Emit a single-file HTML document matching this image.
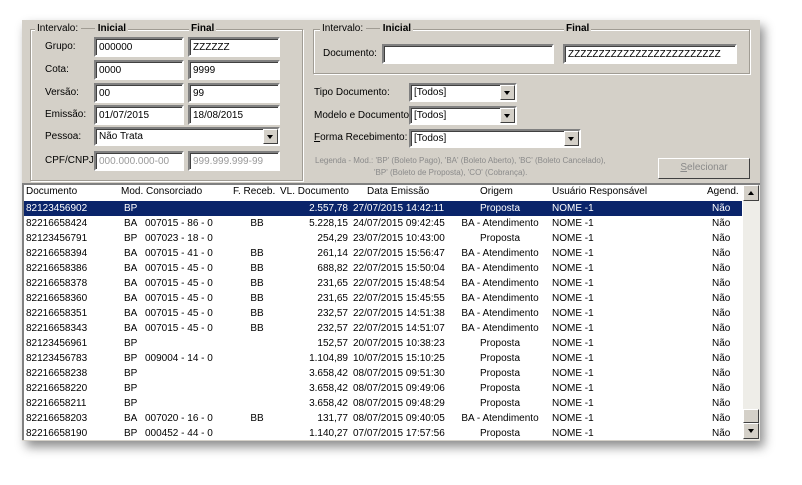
<!DOCTYPE html>
<html><head><meta charset="utf-8"><style>
*{margin:0;padding:0;box-sizing:border-box}
body{width:802px;height:485px;background:#fff;position:relative;overflow:hidden;font-family:"Liberation Sans",Arial,sans-serif;font-size:10px;color:#000}
.a{position:absolute;white-space:nowrap}
.win{position:absolute;left:22px;top:20px;width:738px;height:421px;background:#d4d0c8;box-shadow:4px 6px 10px rgba(0,0,0,.45)}
.gb{position:absolute;border:1px solid #a09c94;box-shadow:1px 1px 0 #fff inset,1px 1px 0 #fff}
.lg{position:absolute;top:-7px;background:#d4d0c8;padding:0 2px;font-size:10px}
.in{position:absolute;background:#fff;border:2px solid;border-color:#808080 #fff #fff #808080;box-shadow:inset 1px 1px 0 #404040;height:20px;padding:2px 3px;font-size:10px;line-height:14px;overflow:hidden;white-space:nowrap}
.dis2{background:#fff;color:#9a9a9a}
.cb{position:absolute;background:#fff;border:2px solid;border-color:#808080 #fff #fff #808080;box-shadow:inset 1px 1px 0 #404040;height:19px;padding:1px 3px;line-height:14px}
.cb .btn{position:absolute;right:0;top:0;width:15px;height:15px;background:#d4d0c8;border:1px solid;border-color:#fff #404040 #404040 #fff}
.tri{position:absolute;left:3px;top:5px;width:0;height:0;border-left:3.5px solid transparent;border-right:3.5px solid transparent;border-top:4px solid #000}
.list{position:absolute;left:22px;top:183px;width:738px;height:257px;background:#fff;border-top:2px solid #808080;border-left:2px solid #808080}
.row{position:absolute;left:0;width:718px;height:15px;line-height:15px}
.row span{position:absolute;white-space:nowrap}
.sel{background:#0a246a;color:#fff}
</style></head><body>
<div class="win"></div>
<div class="gb" style="left:30px;top:29px;width:273px;height:152px">
<div class="lg" style="left:4px">Intervalo: <span style="display:inline-block;width:14px;border-top:1px solid #a09c94;vertical-align:middle"></span> <b>Inicial</b></div>
<div class="lg" style="left:158px"><b>Final</b></div>
</div>
<div class="a" style="left:45px;top:41px">Grupo:</div>
<div class="a" style="left:45px;top:64px">Cota:</div>
<div class="a" style="left:45px;top:87px">Versão:</div>
<div class="a" style="left:45px;top:109px">Emissão:</div>
<div class="a" style="left:45px;top:131px">Pessoa:</div>
<div class="a" style="left:45px;top:155px">CPF/CNPJ:</div>
<div class="in" style="left:94px;top:37px;width:90px">000000</div>
<div class="in" style="left:188px;top:37px;width:92px">ZZZZZZ</div>
<div class="in" style="left:94px;top:60px;width:90px">0000</div>
<div class="in" style="left:188px;top:60px;width:92px">9999</div>
<div class="in" style="left:94px;top:83px;width:90px">00</div>
<div class="in" style="left:188px;top:83px;width:92px">99</div>
<div class="in" style="left:94px;top:105px;width:90px">01/07/2015</div>
<div class="in" style="left:188px;top:105px;width:92px">18/08/2015</div>
<div class="cb" style="left:94px;top:127px;width:186px">Não Trata<div class="btn"><div class="tri"></div></div></div>
<div class="in dis2" style="left:94px;top:151px;width:90px">000.000.000-00</div>
<div class="in dis2" style="left:188px;top:151px;width:92px">999.999.999-99</div>
<div class="gb" style="left:313px;top:29px;width:437px;height:45px">
<div class="lg" style="left:6px">Intervalo: <span style="display:inline-block;width:14px;border-top:1px solid #a09c94;vertical-align:middle"></span> <b>Inicial</b></div>
<div class="lg" style="left:250px"><b>Final</b></div>
</div>
<div class="a" style="left:323px;top:48px">Documento:</div>
<div class="in" style="left:382px;top:44px;width:172px"></div>
<div class="in" style="left:563px;top:44px;width:174px">ZZZZZZZZZZZZZZZZZZZZZZZZZ</div>
<div class="a" style="left:314px;top:87px">Tipo Documento:</div>
<div class="a" style="left:314px;top:110px">Modelo e Documento:</div>
<div class="a" style="left:314px;top:132px"><u>F</u>orma Recebimento:</div>
<div class="cb" style="left:409px;top:83px;width:108px">[Todos]<div class="btn"><div class="tri"></div></div></div>
<div class="cb" style="left:409px;top:106px;width:108px">[Todos]<div class="btn"><div class="tri"></div></div></div>
<div class="cb" style="left:409px;top:129px;width:172px">[Todos]<div class="btn"><div class="tri"></div></div></div>
<div class="a" style="left:315px;top:155px;font-size:8px;color:#8a8a8a;line-height:12px">Legenda - Mod.: 'BP' (Boleto Pago), 'BA' (Boleto Aberto), 'BC' (Boleto Cancelado),<br><span style="padding-left:59px">'BP' (Boleto de Proposta), 'CO' (Cobrança).</span></div>
<div class="a" style="left:658px;top:158px;width:92px;height:21px;border:1px solid;border-color:#fff #404040 #404040 #fff;text-align:center;line-height:18px;color:#8a8a8a;font-size:10px"><u>S</u>elecionar</div>
<div class="list">
<div class="row" style="top:0;height:16px;line-height:14px">
<span style="left:2px">Documento</span><span style="left:97px">Mod. Consorciado</span><span style="left:209px">F. Receb.</span><span style="left:256px">VL. Documento</span><span style="left:343px">Data Emissão</span><span style="left:456px">Origem</span><span style="left:528px">Usuário Responsável</span><span style="left:683px">Agend.</span>
</div>
<div id="rows"></div>
<div style="position:absolute;left:719px;top:0;width:17px;height:255px;background:#eeede8"></div>
<div style="position:absolute;left:719px;top:0;width:16px;height:16px;background:#d4d0c8;border:1px solid;border-color:#fff #404040 #404040 #fff"><div style="position:absolute;left:4px;top:5px;border-left:3.5px solid transparent;border-right:3.5px solid transparent;border-bottom:4px solid #000"></div></div>
<div style="position:absolute;left:719px;top:224px;width:16px;height:14px;background:#d4d0c8;border:1px solid;border-color:#fff #404040 #404040 #fff"></div>
<div style="position:absolute;left:719px;top:238px;width:16px;height:16px;background:#d4d0c8;border:1px solid;border-color:#fff #404040 #404040 #fff"><div style="position:absolute;left:4px;top:5px;border-left:3.5px solid transparent;border-right:3.5px solid transparent;border-top:4px solid #000"></div></div>
</div>
<script>
var d=[
["82123456902","BP","","","2.557,78","27/07/2015 14:42:11","Proposta"],
["82216658424","BA","007015 - 86 - 0","BB","5.228,15","24/07/2015 09:42:45","BA - Atendimento"],
["82123456791","BP","007023 - 18 - 0","","254,29","23/07/2015 10:43:00","Proposta"],
["82216658394","BA","007015 - 41 - 0","BB","261,14","22/07/2015 15:56:47","BA - Atendimento"],
["82216658386","BA","007015 - 45 - 0","BB","688,82","22/07/2015 15:50:04","BA - Atendimento"],
["82216658378","BA","007015 - 45 - 0","BB","231,65","22/07/2015 15:48:54","BA - Atendimento"],
["82216658360","BA","007015 - 45 - 0","BB","231,65","22/07/2015 15:45:55","BA - Atendimento"],
["82216658351","BA","007015 - 45 - 0","BB","232,57","22/07/2015 14:51:38","BA - Atendimento"],
["82216658343","BA","007015 - 45 - 0","BB","232,57","22/07/2015 14:51:07","BA - Atendimento"],
["82123456961","BP","","","152,57","20/07/2015 10:38:23","Proposta"],
["82123456783","BP","009004 - 14 - 0","","1.104,89","10/07/2015 15:10:25","Proposta"],
["82216658238","BP","","","3.658,42","08/07/2015 09:51:30","Proposta"],
["82216658220","BP","","","3.658,42","08/07/2015 09:49:06","Proposta"],
["82216658211","BP","","","3.658,42","08/07/2015 09:48:29","Proposta"],
["82216658203","BA","007020 - 16 - 0","BB","131,77","08/07/2015 09:40:05","BA - Atendimento"],
["82216658190","BP","000452 - 44 - 0","","1.140,27","07/07/2015 17:57:56","Proposta"]];
var h="";d.forEach(function(r,i){h+='<div class="row'+(i==0?' sel':'')+'" style="top:'+(16+i*15)+'px"><span style="left:2px">'+r[0]+'</span><span style="left:100px">'+r[1]+'</span><span style="left:121px">'+r[2]+'</span><span style="left:213px;width:40px;text-align:center">'+r[3]+'</span><span style="left:250px;width:74px;text-align:right">'+r[4]+'</span><span style="left:329px">'+r[5]+'</span><span style="left:416px;width:120px;text-align:center">'+r[6]+'</span><span style="left:528px">NOME -1</span><span style="left:688px">Não</span></div>'});
document.getElementById("rows").innerHTML=h;
</script>
</body></html>
